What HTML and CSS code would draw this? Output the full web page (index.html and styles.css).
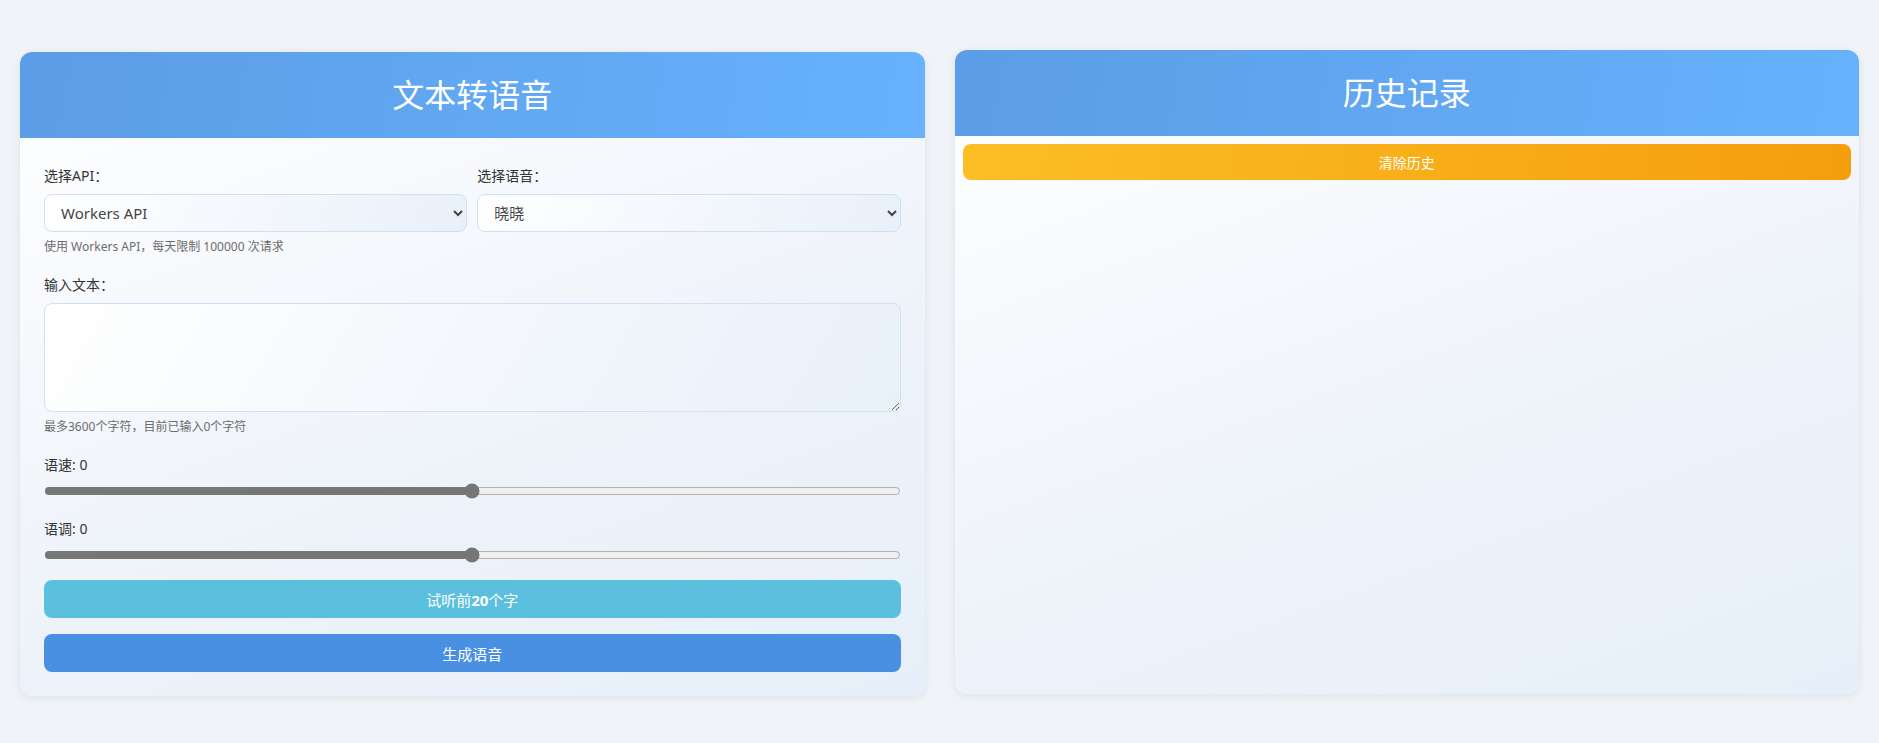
FILE: index.html
```html
<!DOCTYPE html>
<html lang="zh-CN">

<head>
    <meta charset="UTF-8">
    <meta name="viewport" content="width=device-width, initial-scale=1.0">
    <title>文本转语音</title>
    <link rel="stylesheet" href="styles.css">
</head>

<body>
    <div class="container">
        <!-- 左侧：文本转语音 -->
        <div class="card card-main">
            <div class="card-header">
                <h1>文本转语音</h1>
            </div>
            <div class="card-body">
                <div class="form-group">
                    <div class="row">
                        <div class="col">
                            <label for="api">选择API：</label>
                            <select id="api" class="field">
                                <option>Workers API</option>
                            </select>
                        </div>
                        <div class="col">
                            <label for="voice">选择语音：</label>
                            <select id="voice" class="field">
                                <option>晓晓</option>
                            </select>
                        </div>
                    </div>
                    <div class="hint">使用 Workers API，每天限制 100000 次请求</div>
                </div>
                <div class="form-group">
                    <label for="text">输入文本：</label>
                    <textarea id="text" class="field textarea"></textarea>
                    <div class="hint">最多3600个字符，目前已输入<span id="count">0</span>个字符</div>
                </div>
                <div class="form-group">
                    <label for="rate">语速: <span id="rateValue">0</span></label>
                    <input type="range" id="rate" min="-100" max="100" value="0">
                </div>
                <div class="form-group last">
                    <label for="pitch">语调: <span id="pitchValue">0</span></label>
                    <input type="range" id="pitch" min="-100" max="100" value="0">
                </div>
                <button class="btn btn-preview">试听前<b>20</b>个字</button>
                <button class="btn btn-generate">生成语音</button>
            </div>
        </div>

        <!-- 右侧：历史记录 -->
        <div class="card card-history">
            <div class="card-header">
                <h1>历史记录</h1>
            </div>
            <div class="history-body">
                <button class="btn btn-clear">清除历史</button>
                <ul class="history-list"></ul>
            </div>
        </div>
    </div>
    <script>
        var text = document.querySelector('#text')
        text.addEventListener('input', function () {
            document.querySelector('#count').innerHTML = this.value.length
        })
        document.querySelector('#rate').addEventListener('input', function () {
            document.querySelector('#rateValue').innerHTML = this.value
        })
        document.querySelector('#pitch').addEventListener('input', function () {
            document.querySelector('#pitchValue').innerHTML = this.value
        })
    </script>
</body>

</html>
```

FILE: styles.css
```css
* {
    margin: 0;
    padding: 0;
    box-sizing: border-box;
}

ul,
li {
    list-style: none;
}

body {
    font-family: "Noto Sans", "Noto Sans CJK SC", sans-serif;
    font-size: 14px;
    color: #333;
    background-color: #f0f3f8;
}

.container {
    display: grid;
    grid-template-columns: 1fr 1fr;
    gap: 30px;
    padding: 52px 20px 47px;
}

.card {
    border-radius: 12px;
    overflow: hidden;
    background: linear-gradient(160deg, #ffffff 0%, #eef3fa 60%, #e6eff9 100%);
    box-shadow: 0 2px 8px rgba(0, 0, 0, 0.08);
}

/* 右侧卡片悬停上移 */
.card-history {
    transform: translateY(-2px);
}

.card-header {
    padding: 20px;
    background: linear-gradient(100deg, #5b9de6, #67b1fd);
    text-align: center;
}

.card-header h1 {
    font-size: 32px;
    font-weight: 400;
    line-height: 46px;
    color: #fff;
}

.card-body {
    padding: 28px 24px 24px;
}

.form-group {
    margin-bottom: 20px;
}

.form-group.last {
    margin-bottom: 17px;
}

.row {
    display: flex;
    gap: 10px;
}

.col {
    flex: 1;
}

label {
    display: block;
    line-height: 20px;
    margin-bottom: 8px;
}

.field {
    display: block;
    width: 100%;
    font-family: "Noto Sans", "Noto Sans CJK SC", sans-serif;
    font-size: 15px;
    color: #444;
    border: 1px solid #cfe0f4;
    border-radius: 8px;
    background: linear-gradient(120deg, #ffffff, #e8f0f9);
    outline: none;
}

select.field {
    height: 38px;
    padding: 0 12px;
}

.textarea {
    height: 109px;
    padding: 10px 12px;
    resize: vertical;
}

.hint {
    margin-top: 6px;
    font-size: 12px;
    line-height: 17px;
    color: #6c6c6c;
}

input[type="range"] {
    display: block;
    width: 100%;
    height: 16px;
    margin: 0;
    accent-color: #767676;
}

.btn {
    display: block;
    width: 100%;
    height: 38px;
    border: none;
    border-radius: 8px;
    font-family: "Noto Sans", "Noto Sans CJK SC", sans-serif;
    font-size: 15px;
    color: #fff;
    cursor: pointer;
}

.btn-preview {
    background-color: #5bc0de;
    margin-bottom: 16px;
}

.btn-generate {
    background-color: #4a90e2;
}

.history-body {
    padding: 8px;
}

.btn-clear {
    height: 36px;
    font-size: 14px;
    background: linear-gradient(100deg, #fbbf24, #f59e0b);
}
```
